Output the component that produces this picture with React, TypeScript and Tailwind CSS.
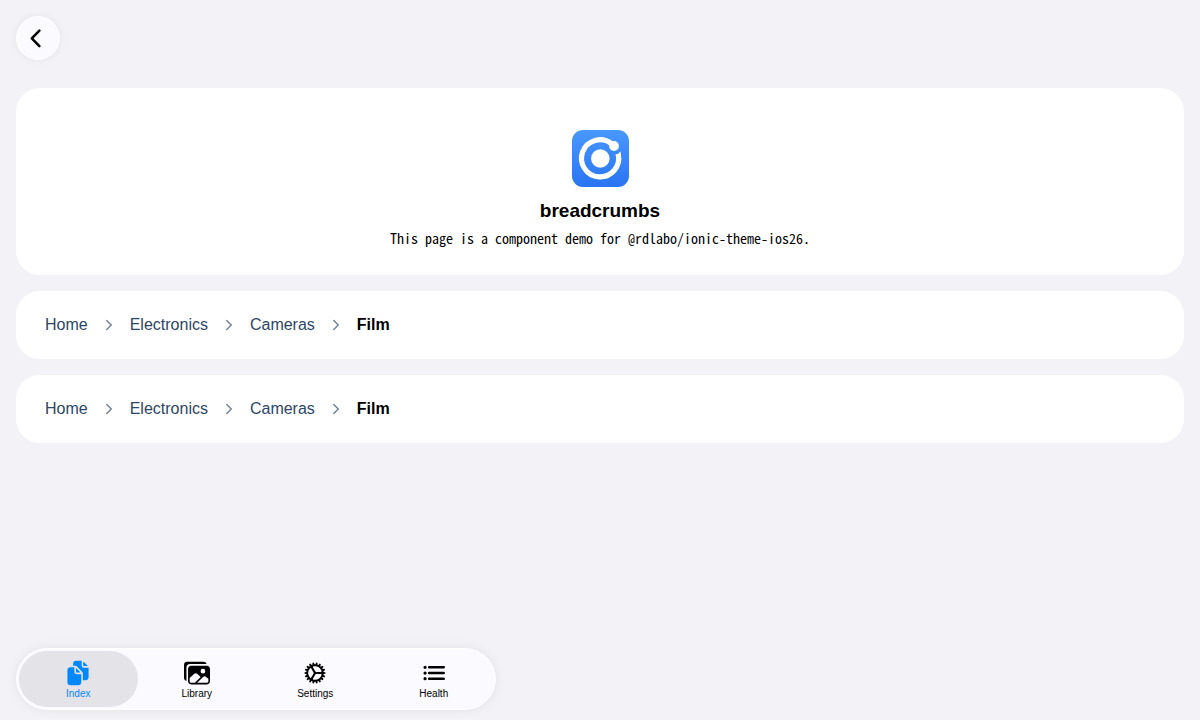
import type { IconType } from "react-icons";
import {
  IoChevronForwardOutline,
  IoCog,
  IoDocuments,
  IoImages,
  IoList,
} from "react-icons/io5";

const crumbs = ["Home", "Electronics", "Cameras", "Film"];

const tabs: { label: string; icon: IconType }[] = [
  { label: "Index", icon: IoDocuments },
  { label: "Library", icon: IoImages },
  { label: "Settings", icon: IoCog },
  { label: "Health", icon: IoList },
];

function BackIcon() {
  return (
    <svg viewBox="0 0 24 24" className="size-6" aria-hidden="true">
      <path
        d="M15.4 4.7 L7.8 12.4 L15.4 20.1"
        fill="none"
        stroke="currentColor"
        strokeWidth="2.5"
        strokeLinecap="round"
        strokeLinejoin="round"
      />
    </svg>
  );
}

function IonicLogo() {
  return (
    <svg viewBox="0 0 57 57" className="size-[57px]" aria-hidden="true">
      <defs>
        <linearGradient id="logo-bg" x1="0" y1="0" x2="0" y2="1">
          <stop offset="0" stopColor="#4898ff" />
          <stop offset="1" stopColor="#2a74f2" />
        </linearGradient>
      </defs>
      <rect width="57" height="57" rx="11" fill="url(#logo-bg)" />
      <circle cx="28.3" cy="28.5" r="9.3" fill="#fff" />
      <path
        d="M39.5 13.6 A18.6 18.6 0 1 0 46.2 24"
        fill="none"
        stroke="#fff"
        strokeWidth="5.2"
      />
      <path d="M43.6 24.8 Q46.5 24 48.4 21.4 L49 25 L44 26 Z" fill="#fff" />
      <circle cx="42" cy="16" r="4.9" fill="#fff" />
    </svg>
  );
}

function Breadcrumbs() {
  return (
    <nav aria-label="Breadcrumb" className="rounded-3xl bg-white px-[17px] py-[17px]">
      <ol className="flex flex-wrap items-center">
        {crumbs.map((name, i) => {
          const last = i === crumbs.length - 1;
          return (
            <li key={name} className="flex h-[34px] items-center">
              <a
                href="#"
                aria-current={last ? "page" : undefined}
                className={last ? "px-3 font-bold text-black" : "px-3 text-[#2d4665]"}
              >
                {name}
              </a>
              {!last && <IoChevronForwardOutline className="mx-px size-4 text-[#73849a]" />}
            </li>
          );
        })}
      </ol>
    </nav>
  );
}

export default function App() {
  return (
    <div className="flex min-h-screen flex-col bg-[#f2f2f7] font-['Liberation_Sans',Arial,sans-serif] text-base text-black">
      <header className="px-4 pt-4">
        <button
          type="button"
          aria-label="Back"
          className="flex size-11 items-center rounded-full border border-white bg-[#fafaff] pl-[7px] shadow-[0_0_8px_rgba(0,0,0,0.06)]"
        >
          <BackIcon />
        </button>
      </header>
      <main className="flex flex-1 flex-col gap-4 px-4 pt-7">
        <section className="flex flex-col items-center rounded-3xl bg-white pt-[42px] pb-[25px]">
          <IonicLogo />
          <h1 className="mt-3 text-[19px] leading-6 font-bold">breadcrumbs</h1>
          <p className="mt-1 font-['Noto_Sans_Mono_CJK_JP','Noto_Sans_CJK_JP',monospace] text-sm leading-[23px]">
            This page is a component demo for @rdlabo/ionic-theme-ios26.
          </p>
        </section>
        <Breadcrumbs />
        <Breadcrumbs />
      </main>
      <footer className="px-4 pb-[10px]">
        <nav
          aria-label="Main"
          className="flex max-w-[480px] rounded-full border border-white bg-[#fafaff] p-0.5 shadow-[0_0_12px_rgba(0,0,0,0.07)]"
        >
          {tabs.map(({ label, icon: Icon }, i) => (
            <button
              key={label}
              type="button"
              aria-current={i === 0 ? "page" : undefined}
              className={
                i === 0
                  ? "flex h-14 flex-1 flex-col items-center gap-0.5 rounded-full bg-[#e4e3e8] pt-[9px] text-[#0088ff]"
                  : "flex h-14 flex-1 flex-col items-center gap-0.5 rounded-full pt-[9px]"
              }
            >
              <Icon className="size-[26px]" />
              <span className="text-[10px] leading-3">{label}</span>
            </button>
          ))}
        </nav>
      </footer>
    </div>
  );
}
